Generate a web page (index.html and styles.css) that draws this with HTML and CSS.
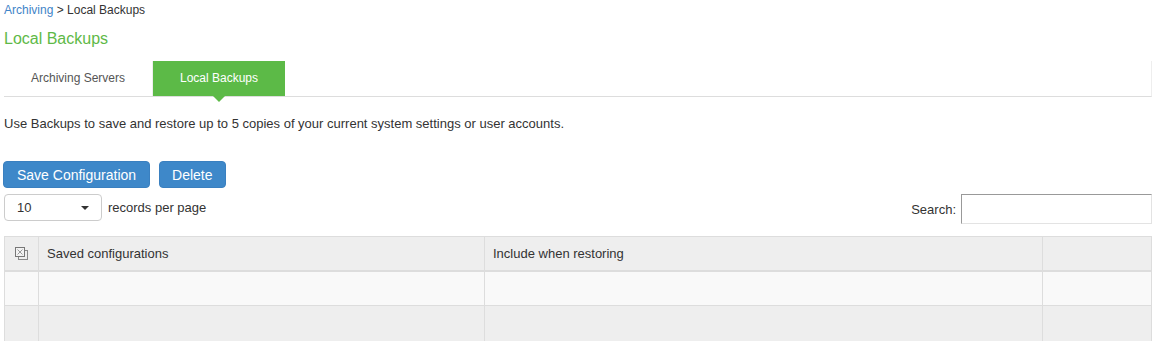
FILE: index.html
```html
<!DOCTYPE html>
<html lang="en">

<head>
    <meta charset="UTF-8">
    <meta name="viewport" content="width=device-width, initial-scale=1.0">
    <title>Local Backups</title>
    <link rel="stylesheet" href="styles.css">
</head>

<body>

    <div id="wrapper">
        <div class="crumbs"><a href="#">Archiving</a> &gt; Local Backups</div>
        <h1 class="title">Local Backups</h1>

        <ul class="tabs">
            <li><a href="#">Archiving Servers</a></li>
            <li class="active"><a href="#">Local Backups</a></li>
        </ul>

        <p class="intro">Use Backups to save and restore up to 5 copies of your current system settings or user accounts.</p>

        <div class="actions">
            <button class="btn btn-save">Save Configuration</button>
            <button class="btn">Delete</button>
        </div>

        <div class="tools">
            <div class="length">
                <div class="select"><span>10</span><i class="caret"></i></div>
                <span>records per page</span>
            </div>
            <label class="search">Search: <input type="text"></label>
        </div>

        <table class="grid">
            <colgroup>
                <col class="c-check">
                <col class="c-name">
                <col class="c-include">
                <col>
            </colgroup>
            <thead>
                <tr>
                    <th class="check">
                        <svg width="13" height="13" viewBox="0 0 13 13">
                            <rect x="3.5" y="3.5" width="9" height="9" fill="#eee" stroke="#8a8a8a" />
                            <rect x="0.5" y="0.5" width="9" height="9" fill="#f2f2f2" stroke="#777" />
                            <path d="M2.5 2.5l5 5M7.5 2.5l-5 5" stroke="#999" />
                        </svg>
                    </th>
                    <th>Saved configurations</th>
                    <th>Include when restoring</th>
                    <th></th>
                </tr>
            </thead>
            <tbody>
                <tr class="odd"><td></td><td></td><td></td><td></td></tr>
                <tr class="even"><td></td><td></td><td></td><td></td></tr>
            </tbody>
        </table>
    </div>

</body>

</html>
```

FILE: styles.css
```css
body {
    margin: 0;
    color: #333;
    font-family: "Liberation Sans", Arial, sans-serif;
    font-size: 13px;
}

#wrapper {
    padding: 2px 6px 0 4px;
}

.crumbs {
    font-size: 12px;
    line-height: 16px;
}

.crumbs a {
    color: #3f84c8;
    text-decoration: none;
}

.title {
    margin: 11px 0 12px;
    font-size: 16px;
    font-weight: normal;
    line-height: 20px;
    color: #5eb947;
}

.tabs {
    display: flex;
    margin: 0;
    padding: 0;
    list-style: none;
    height: 35px;
    border-bottom: 1px solid #ddd;
    border-right: 1px solid #eee;
}

.tabs li {
    position: relative;
}

.tabs li:first-child {
    width: 148px;
    border-right: 1px solid #eee;
}

.tabs li a {
    display: block;
    line-height: 35px;
    text-align: center;
    font-size: 12px;
    color: #555;
    text-decoration: none;
}

.tabs li.active {
    width: 132px;
    background: #5cba47;
}

.tabs li.active a {
    color: #fff;
}

.tabs li.active::after {
    content: "";
    position: absolute;
    left: 50%;
    bottom: -6px;
    margin-left: -6px;
    border-left: 6px solid transparent;
    border-right: 6px solid transparent;
    border-top: 6px solid #5cba47;
}

.intro {
    margin: 18px 0 0;
    line-height: 18px;
}

.actions {
    display: flex;
    gap: 9px;
    margin: 28px 0 0 -1px;
}

.btn {
    height: 27px;
    padding: 0 12px;
    border: 1px solid #3a80c0;
    border-radius: 4px;
    background: #3e88c9;
    color: #fff;
    font-family: inherit;
    font-size: 14px;
}

.btn-save {
    padding: 0 13px;
}

.tools {
    display: flex;
    justify-content: space-between;
    align-items: flex-start;
    margin-top: 6px;
}

.length {
    display: flex;
    align-items: center;
    gap: 6px;
}

.select {
    display: flex;
    align-items: center;
    justify-content: space-between;
    box-sizing: border-box;
    width: 98px;
    height: 27px;
    padding: 0 12px 0 12px;
    border: 1px solid #ccc;
    border-radius: 4px;
}

.caret {
    border-left: 4px solid transparent;
    border-right: 4px solid transparent;
    border-top: 4px solid #333;
}

.search {
    display: flex;
    align-items: center;
    gap: 5px;
}

.search input {
    box-sizing: border-box;
    width: 191px;
    height: 30px;
    margin: 0;
    border: 1px solid #e3e3e3;
    border-top-color: #999;
    border-left-color: #999;
}

.grid {
    width: 1148px;
    margin-top: 12px;
    border-collapse: collapse;
    table-layout: fixed;
}

.c-check {
    width: 34px;
}

.c-name {
    width: 446px;
}

.c-include {
    width: 558px;
}

.grid th,
.grid td {
    height: 33px;
    padding: 0 8px;
    border: 1px solid #ddd;
    text-align: left;
    font-weight: normal;
}

.grid thead tr {
    background: #eee;
}

.grid thead th {
    height: 32px;
    padding-bottom: 1px;
    border-bottom-width: 2px;
}

.grid th.check {
    padding: 0;
    text-align: center;
}

.grid th.check svg {
    display: block;
    margin: 0 auto;
}

.grid tr.odd {
    background: #f9f9f9;
}

.grid tr.even {
    background: #eee;
}

.grid tr.even td {
    height: 40px;
}
```
